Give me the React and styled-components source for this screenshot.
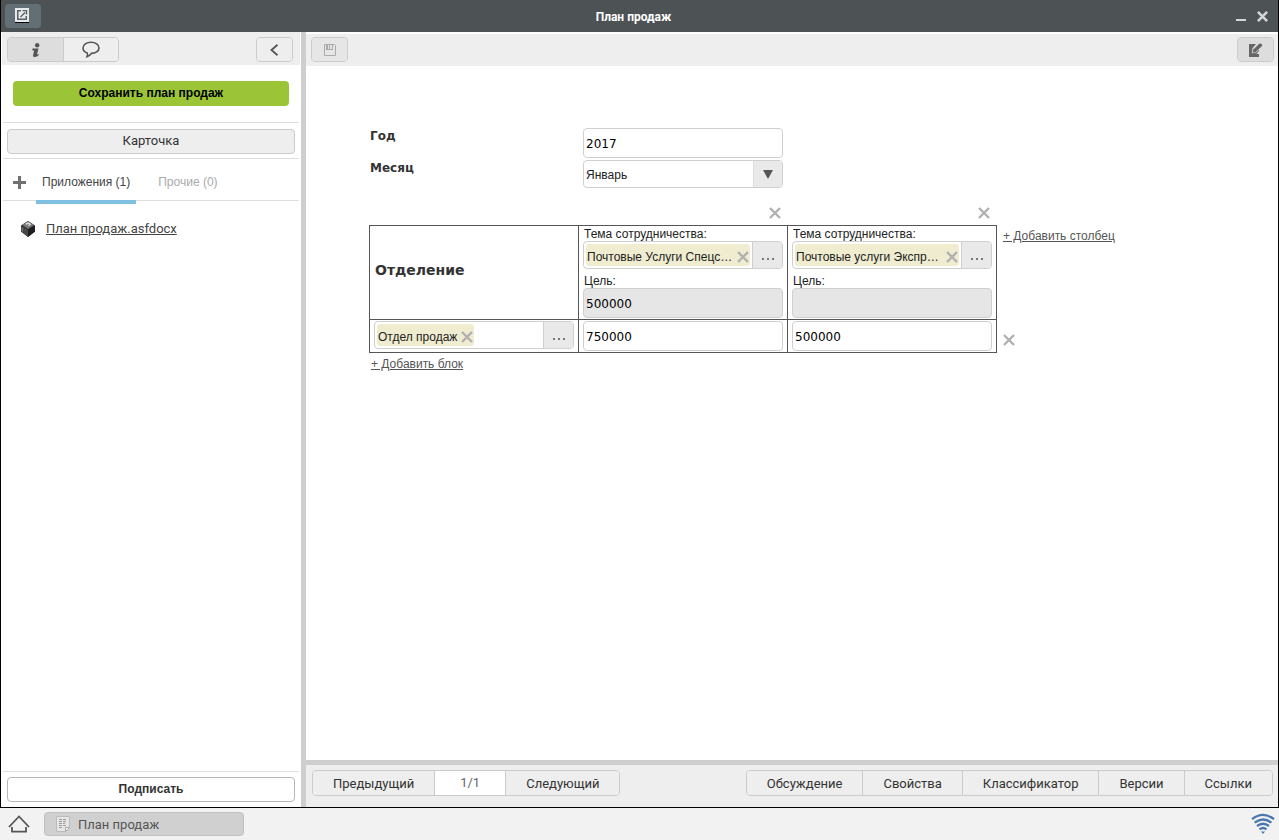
import React, { useState } from "react";
import styled, { createGlobalStyle } from "styled-components";

const sans = `"Liberation Sans", Arial, sans-serif`;
const ui = `Roboto, Tahoma, sans-serif`;
const verdana = `"DejaVu Sans", Verdana, sans-serif`;

const months = ["Январь", "Февраль", "Март", "Апрель", "Май", "Июнь", "Июль", "Август", "Сентябрь", "Октябрь", "Ноябрь", "Декабрь"];

// Icons
const OpenIcon = () => (
  <svg width="14" height="15" viewBox="0 0 14 15" aria-hidden="true">
    <path d="M0 0h14v14H0z" fill="#e8eaea" />
    <path d="M2 2h4v1.500H3.500v7h7V8H12v4H2z" fill="#56616a" />
    <path d="M5.500 9L10 4.500M7.500 2.600h4V6.600" fill="none" stroke="#56616a" strokeWidth="1.400" />
    <path d="M0 14.500h14" stroke="#000" />
  </svg>
);

const InfoIcon = () => (
  <svg width="10" height="16" viewBox="0 0 10 16" fill="#555" aria-hidden="true">
    <circle cx="6.200" cy="3.200" r="2.200" />
    <path d="M1.500 6.600h6L6 12.400q.8.100 1.400-.5l.7.700Q6.800 15 4 15q-2.500 0-1.800-2.600L3.200 8.400H1.300z" />
  </svg>
);

const CommentIcon = () => (
  <svg width="18" height="17" viewBox="0 0 18 17" fill="none" stroke="#555" strokeWidth="1.600" aria-hidden="true">
    <path d="M5 15.600C5.600 14.500 5.700 13 5.200 11.900 2.700 11.200 1 9.400 1 7 1 3.700 4.500 1.300 9 1.300S17 3.700 17 7s-3.600 5.400-7.600 5.400C8.200 14 6.700 15.200 5 15.600z" />
  </svg>
);

const BackIcon = () => (
  <svg width="12" height="12" viewBox="0 0 12 12" fill="none" stroke="#555" strokeWidth="1.800" aria-hidden="true">
    <path d="M8.500 .8L2.500 6l6 5.200" />
  </svg>
);

const PlusIcon = () => (
  <svg width="13" height="13" viewBox="0 0 13 13" aria-hidden="true">
    <path d="M5 0h3v5h5v3H8v5H5V8H0V5h5z" fill="#707070" />
  </svg>
);

const CubeIcon = () => (
  <svg width="14" height="16" viewBox="0 0 14 16" aria-hidden="true">
    <path d="M7 0l7 4.500v6L7 16l-7-5.500v-6z" fill="#2c2c2c" />
    <path d="M7 0l6 4-6 4-6-4z" fill="#777" />
    <path d="M0 5l7 3.800V16l-7-5.500z" fill="#484848" />
    <path d="M14 5L7 8.800V16l7-5.500z" fill="#1d1d1d" />
    <path d="M4.800 3.400L7.200 2l2 1.300-1.800 1.500" fill="none" stroke="#e4e4e4" strokeWidth="1.300" />
    <path d="M1.500 6.500v4" stroke="#777" />
  </svg>
);

const FloppyIcon = () => (
  <svg width="12" height="12" viewBox="0 0 12 12" aria-hidden="true">
    <path d="M.5.500h10l1 1v10H.5z" fill="none" stroke="#aaa" />
    <path d="M2 0h7v6H2z" fill="#aaa" />
    <path d="M4 1h1v4H4zM6 1h2v4H6z" fill="#e6e6e6" />
  </svg>
);

const EditIcon = () => (
  <svg width="15" height="14" viewBox="0 0 15 14" aria-hidden="true">
    <path d="M1 1h7L4.500 5.200 3.700 10.500l4.500-.9L11 6.800V14H1z" fill="#666" />
    <path d="M11 8v3H8.500z" fill="#ddd" />
    <path d="M4.500 9.800L5.300 6.500 11.600.6q.9-.6 2 .4t.4 2L7.700 9z" fill="#666" />
  </svg>
);

const CrossIcon = ({ size = 12, color = "#b0b0b0", weight = 2.4 }) => (
  <svg width={size} height={size} viewBox="0 0 12 12" aria-hidden="true">
    <path d="M1 1l10 10M11 1L1 11" stroke={color} strokeWidth={weight} />
  </svg>
);

const HomeIcon = () => (
  <svg width="22" height="18" viewBox="0 0 22 18" fill="none" stroke="#555" strokeWidth="1.800" aria-hidden="true">
    <path d="M1 12L11 1.500 21 12" />
    <path d="M4 12v4.700h14V12" />
  </svg>
);

const NoteIcon = () => (
  <svg width="14" height="16" viewBox="0 0 14 16" aria-hidden="true">
    <path d="M.5.500h13v11l-4 4h-9z" fill="#e6e6e6" stroke="#bbb" />
    <path d="M3 3.500h8M3 5.500h8M3 7.500h6M3 9.500h7M3 11.500h4" stroke="#999" strokeDasharray="3 1" />
    <path d="M13.500 11.500h-4v4z" fill="#fafafa" stroke="#aaa" />
  </svg>
);

const WifiIcon = () => (
  <svg width="24" height="22" viewBox="0 0 24 22" fill="none" stroke="#4a78ae" strokeWidth="2.300" aria-hidden="true">
    <path d="M1 6.200Q12-2.400 23 6.200" />
    <path d="M3.600 9.700Q12 3.200 20.400 9.700" />
    <path d="M6 13Q12 8.400 18 13" />
    <path d="M8.500 16.300Q12 13.700 15.500 16.300" />
    <path d="M10 18.600h4l-2 2.400z" fill="#4a78ae" stroke="none" />
  </svg>
);

// Lookup field with a tag and a "..." button
const Lookup = ({ label, value, wide }) => {
  const [tag, setTag] = useState(value);

  return (
    <LookupBox>
      <LookupValue>
        {tag && (
          <Tag $wide={wide}>
            <TagText>{tag}</TagText>
            <IconButton type="button" aria-label="Удалить" onClick={() => setTag("")}>
              <CrossIcon />
            </IconButton>
          </Tag>
        )}
      </LookupValue>
      <LookupButton type="button" aria-label={label}>
        <i /><i /><i />
      </LookupButton>
    </LookupBox>
  );
};

const App = () => {
  const [form, setForm] = useState({
    year: "2017",
    month: "Январь",
    first: "750000",
    second: "500000",
  });

  const handleChange = (e) => {
    const { name, value } = e.target;
    setForm({ ...form, [name]: value });
  };

  return (
    <>
      <GlobalStyle />
      <Page>
        <Window>
          <TitleBar>
            <OpenButton type="button" aria-label="Открыть">
              <OpenIcon />
            </OpenButton>
            <Title>План продаж</Title>
            <WindowControls>
              <IconButton type="button" aria-label="Свернуть">
                <svg width="10" height="12" viewBox="0 0 10 12" aria-hidden="true">
                  <path d="M0 10h10" stroke="#d6d6d6" strokeWidth="2" />
                </svg>
              </IconButton>
              <IconButton type="button" aria-label="Закрыть">
                <CrossIcon size={11} color="#d6d6d6" weight={2.8} />
              </IconButton>
            </WindowControls>
          </TitleBar>

          <Body>
            <Sidebar>
              <SideToolbar>
                <Group>
                  <ToolButton type="button" aria-label="Информация" $wide $active>
                    <InfoIcon />
                  </ToolButton>
                  <ToolButton type="button" aria-label="Комментарии" $wide>
                    <CommentIcon />
                  </ToolButton>
                </Group>
                <Group>
                  <ToolButton type="button" aria-label="Скрыть панель">
                    <BackIcon />
                  </ToolButton>
                </Group>
              </SideToolbar>
              <SaveArea>
                <SaveButton type="button">Сохранить план продаж</SaveButton>
              </SaveArea>
              <SideSection>
                <SideButton type="button">Карточка</SideButton>
              </SideSection>
              <Tabs>
                <AddButton type="button" aria-label="Добавить">
                  <PlusIcon />
                </AddButton>
                <Tab type="button" $active>Приложения (1)</Tab>
                <Tab type="button">Прочие (0)</Tab>
              </Tabs>
              <Files>
                <li>
                  <CubeIcon />
                  <FileLink href="#file">План продаж.asfdocx</FileLink>
                </li>
              </Files>
              <SideSection $bottom>
                <SideButton type="button" $primary>Подписать</SideButton>
              </SideSection>
            </Sidebar>

            <Main>
              <MainToolbar>
                <Group>
                  <ToolButton type="button" aria-label="Сохранить" disabled>
                    <FloppyIcon />
                  </ToolButton>
                </Group>
                <Group>
                  <ToolButton type="button" aria-label="Редактировать" $active>
                    <EditIcon />
                  </ToolButton>
                </Group>
              </MainToolbar>

              <Form>
                <Fields>
                  <FieldLabel htmlFor="year">Год</FieldLabel>
                  <Input id="year" name="year" value={form.year} onChange={handleChange} />
                  <FieldLabel htmlFor="month">Месяц</FieldLabel>
                  <SelectBox>
                    <Select id="month" name="month" value={form.month} onChange={handleChange}>
                      {months.map((m) => (
                        <option key={m}>{m}</option>
                      ))}
                    </Select>
                    <SelectArrow>
                      <svg width="10" height="9" viewBox="0 0 10 9" aria-hidden="true">
                        <path d="M0 0h10L5 9z" fill="#555" />
                      </svg>
                    </SelectArrow>
                  </SelectBox>
                </Fields>

                <Table>
                  <colgroup>
                    <col />
                    <col />
                    <col />
                    <col className="actions" />
                  </colgroup>
                  <tbody>
                    <tr>
                      <RemoveCell />
                      <RemoveCell>
                        <IconButton type="button" aria-label="Удалить столбец"><CrossIcon /></IconButton>
                      </RemoveCell>
                      <RemoveCell>
                        <IconButton type="button" aria-label="Удалить столбец"><CrossIcon /></IconButton>
                      </RemoveCell>
                      <RemoveCell />
                    </tr>
                    <tr>
                      <HeadCell scope="col">Отделение</HeadCell>
                      <Cell $head>
                        <CellLabel as="span">Тема сотрудничества:</CellLabel>
                        <Lookup label="Выбрать тему" value="Почтовые Услуги Спецс…" wide />
                        <CellLabel htmlFor="goal1" $second>Цель:</CellLabel>
                        <Input id="goal1" value="500000" readOnly />
                      </Cell>
                      <Cell $head>
                        <CellLabel as="span">Тема сотрудничества:</CellLabel>
                        <Lookup label="Выбрать тему" value="Почтовые услуги Экспр…" wide />
                        <CellLabel htmlFor="goal2" $second>Цель:</CellLabel>
                        <Input id="goal2" value="" readOnly />
                      </Cell>
                      <ActionCell>
                        <ActionLink href="#column">+ Добавить столбец</ActionLink>
                      </ActionCell>
                    </tr>
                    <tr>
                      <Cell>
                        <Lookup label="Выбрать отделение" value="Отдел продаж" />
                      </Cell>
                      <Cell>
                        <Input name="first" aria-label="План" value={form.first} onChange={handleChange} />
                      </Cell>
                      <Cell>
                        <Input name="second" aria-label="План" value={form.second} onChange={handleChange} />
                      </Cell>
                      <ActionCell $row>
                        <IconButton type="button" aria-label="Удалить блок"><CrossIcon /></IconButton>
                      </ActionCell>
                    </tr>
                  </tbody>
                </Table>
                <AddBlock>
                  <ActionLink href="#block">+ Добавить блок</ActionLink>
                </AddBlock>
              </Form>

              <Footer>
                <Group>
                  <FooterButton type="button">Предыдущий</FooterButton>
                  <PageCount>1/1</PageCount>
                  <FooterButton type="button">Следующий</FooterButton>
                </Group>
                <Group>
                  <FooterButton type="button">Обсуждение</FooterButton>
                  <FooterButton type="button">Свойства</FooterButton>
                  <FooterButton type="button">Классификатор</FooterButton>
                  <FooterButton type="button">Версии</FooterButton>
                  <FooterButton type="button">Ссылки</FooterButton>
                </Group>
              </Footer>
            </Main>
          </Body>
        </Window>

        <TaskBar>
          <IconButton type="button" aria-label="Домой">
            <HomeIcon />
          </IconButton>
          <TaskButton type="button">
            <NoteIcon />
            План продаж
          </TaskButton>
          <WifiIcon />
        </TaskBar>
      </Page>
    </>
  );
};

const GlobalStyle = createGlobalStyle`
  * {
    box-sizing: border-box;
  }
  body {
    margin: 0;
    background: #f2f2f2;
    font-family: ${sans};
    font-size: 12px;
    color: #333;
  }
  button, input, select {
    margin: 0;
    font-family: inherit;
  }
  button {
    cursor: pointer;
  }
  svg {
    display: block;
    flex-shrink: 0;
  }
`;

const Page = styled.div`
  display: flex;
  flex-direction: column;
  min-height: 100vh;
`;

const Window = styled.section`
  flex: 1;
  display: flex;
  flex-direction: column;
  border: 1px solid #000;
  border-top: none;
  background: #fff;
`;

const TitleBar = styled.header`
  display: grid;
  grid-template-columns: 1fr auto 1fr;
  align-items: center;
  height: 32px;
  padding: 0 10px 0 4px;
  background: #4d5255;
`;

const OpenButton = styled.button`
  display: flex;
  align-items: center;
  justify-content: center;
  width: 36px;
  height: 24px;
  padding: 0 2px 2px 0;
  border: none;
  border-radius: 4px;
  background: #636f75;
`;

const Title = styled.h1`
  margin: 0;
  padding: 2px 6px 0 0;
  font-family: ${ui};
  font-size: 12px;
  font-weight: bold;
  color: #fff;
`;

const WindowControls = styled.div`
  display: flex;
  align-items: center;
  justify-content: flex-end;
  gap: 11px;
`;

const IconButton = styled.button`
  display: inline-flex;
  padding: 0;
  border: none;
  background: none;
  vertical-align: top;
`;

const Body = styled.div`
  flex: 1;
  display: flex;
`;

const Sidebar = styled.aside`
  display: flex;
  flex-direction: column;
  flex: 0 0 305px;
  border-right: 5px solid #cecece;
  padding: 0 1px;
`;

const Toolbar = styled.div`
  display: flex;
  align-items: flex-start;
  justify-content: space-between;
  background: #eee;
`;

const SideToolbar = styled(Toolbar)`
  height: 33px;
  padding: 5px 7px 0 5px;
`;

const MainToolbar = styled(Toolbar)`
  height: 32px;
  margin-top: 2px;
  padding: 3px 4px 0 5px;
`;

const Group = styled.div`
  display: flex;
  border: 1px solid #cbcbcb;
  border-radius: 4px;
  overflow: hidden;

  && > * + * {
    border-left: 1px solid #cbcbcb;
  }
`;

const ToolButton = styled.button`
  display: flex;
  align-items: center;
  justify-content: center;
  width: ${(p) => (p.$wide ? "55px" : "35px")};
  height: 23px;
  padding: 0;
  border: 0;
  background: ${(p) => (p.$active ? "#ddd" : "#eee")};

  &:disabled {
    background: #e6e6e6;
    cursor: default;
  }
`;

const SaveArea = styled.div`
  padding: 16px 11px;
`;

const SaveButton = styled.button`
  display: block;
  width: 100%;
  height: 25px;
  padding: 0 0 2px;
  border: none;
  border-radius: 4px;
  background: #9bc537;
  color: #000;
  font-size: 12px;
  font-weight: bold;
`;

const SideSection = styled.div`
  margin: ${(p) => (p.$bottom ? "auto" : "0")} 1px 0;
  padding: ${(p) => (p.$bottom ? "5px 4px" : "6px 4px 4px")};
  border-top: 1px solid #ddd;
`;

const SideButton = styled.button`
  display: block;
  width: 100%;
  height: 25px;
  padding: 0 0 2px;
  border: 1px solid ${(p) => (p.$primary ? "#b8b8b8" : "#cbcbcb")};
  border-radius: 4px;
  background: ${(p) => (p.$primary ? "#fff" : "#eee")};
  color: #333;
  font-family: ${(p) => (p.$primary ? sans : ui)};
  font-size: ${(p) => (p.$primary ? "12px" : "13px")};
  font-weight: ${(p) => (p.$primary ? "bold" : "normal")};
`;

const Tabs = styled.div`
  display: flex;
  height: 43px;
  margin: 0 1px;
  padding-left: 10px;
  border-top: 1px solid #ddd;
  border-bottom: 1px solid #ddd;
`;

const AddButton = styled(IconButton)`
  align-items: center;
  margin-right: 10px;
  padding-top: 6px;
`;

const Tab = styled.button`
  height: 45px;
  margin-right: 16px;
  padding: 5px 6px 0;
  border: none;
  border-bottom: 4px solid ${(p) => (p.$active ? "#7fbfdf" : "transparent")};
  background: none;
  color: ${(p) => (p.$active ? "#444" : "#aaa")};
  font-size: 12px;
`;

const Files = styled.ul`
  margin: 0;
  padding: 18px 19px;
  list-style: none;

  li {
    display: flex;
    align-items: center;
    gap: 11px;
  }
`;

const FileLink = styled.a`
  color: #444;
  font-family: ${ui};
  font-size: 13px;
  line-height: 20px;
`;

const Main = styled.main`
  flex: 1;
  min-width: 0;
  display: flex;
  flex-direction: column;
`;

const Form = styled.form`
  flex: 1;
  padding: 62px 63px 20px;
`;

const Fields = styled.div`
  display: grid;
  grid-template-columns: 214px 200px;
  row-gap: 2px;
`;

const FieldLabel = styled.label`
  padding-left: 1px;
  font-family: ${verdana};
  font-size: 12px;
  font-weight: bold;
  line-height: 16px;
`;

const Input = styled.input`
  display: block;
  width: 100%;
  height: 30px;
  padding: 2px 2px 0;
  border: 1px solid #cfcfcf;
  border-radius: 4px;
  background: #fff;
  color: #000;
  font-family: ${verdana};
  font-size: 12px;

  &:read-only {
    background: #e6e6e6;
  }
`;

const SelectBox = styled.div`
  position: relative;
`;

const Select = styled.select`
  appearance: none;
  display: block;
  width: 100%;
  height: 28px;
  padding: 2px 34px 0 2px;
  border: 1px solid #cfcfcf;
  border-radius: 4px;
  background: #fff;
  color: #222;
  font-size: 12px;
`;

const SelectArrow = styled.span`
  position: absolute;
  top: 1px;
  right: 1px;
  bottom: 1px;
  display: flex;
  align-items: center;
  justify-content: center;
  width: 29px;
  border-left: 1px solid #ddd;
  border-radius: 0 3px 3px 0;
  background: #e9e9e9;
  pointer-events: none;
`;

const Table = styled.table`
  table-layout: fixed;
  width: 760px;
  border-collapse: collapse;

  col {
    width: 209px;
  }
  col.actions {
    width: auto;
  }
`;

const RemoveCell = styled.td`
  height: 37px;
  padding: 0 7px 4px 0;
  text-align: right;
  vertical-align: bottom;
`;

const HeadCell = styled.th`
  padding: 0 5px 4px;
  border: 1px solid #555;
  font-family: ${verdana};
  font-size: 14px;
  text-align: left;
`;

const Cell = styled.td`
  padding: ${(p) => (p.$head ? "0 4px 1px" : "1px 4px")};
  border: 1px solid #555;
  vertical-align: top;
`;

const CellLabel = styled.label`
  display: block;
  margin-top: ${(p) => (p.$second ? "4px" : "0")};
  padding: 1px 0 0 1px;
  color: #222;
  line-height: 14px;
`;

const ActionCell = styled.td`
  padding: ${(p) => (p.$row ? "15px 6px 0" : "4px 6px")};
  vertical-align: top;
`;

const ActionLink = styled.a`
  color: #555;
  line-height: 15px;
`;

const AddBlock = styled.div`
  padding: 4px 2px;
`;

const LookupBox = styled.div`
  display: flex;
  height: 28px;
  border: 1px solid #cfcfcf;
  border-radius: 4px;
  overflow: hidden;
`;

const LookupValue = styled.div`
  flex: 1;
  min-width: 0;
  display: flex;
  padding: 2px;
`;

const Tag = styled.span`
  display: flex;
  align-items: center;
  justify-content: space-between;
  gap: 4px;
  width: ${(p) => (p.$wide ? "100%" : "auto")};
  padding: 4px 1px 0;
  border-radius: 3px;
  background: #f0ecd0;
  color: #222;
`;

const TagText = styled.span`
  white-space: nowrap;
`;

const LookupButton = styled.button`
  display: flex;
  align-items: center;
  justify-content: center;
  gap: 3px;
  width: 30px;
  padding: 8px 0 0;
  border: 0;
  border-left: 1px solid #cfcfcf;
  background: #e9e9e9;

  i {
    width: 2px;
    height: 2px;
    background: #777;
  }
`;

const Footer = styled.footer`
  display: flex;
  align-items: flex-start;
  justify-content: space-between;
  padding: 5px 5px 11px 6px;
  border-top: 5px solid #cecece;
  background: #eee;
`;

const FooterButton = styled.button`
  height: 24px;
  padding: 0 20px;
  border: 0;
  background: #eee;
  color: #333;
  font-family: ${ui};
  font-size: 13px;
`;

const PageCount = styled.span`
  width: 71px;
  background: #fff;
  color: #666;
  font-family: ${ui};
  font-size: 13px;
  line-height: 24px;
  text-align: center;
`;

const TaskBar = styled.nav`
  display: flex;
  align-items: center;
  gap: 14px;
  height: 32px;
  padding: 0 4px 0 8px;
  background: #f2f2f2;

  > svg {
    margin-left: auto;
  }
`;

const TaskButton = styled.button`
  display: flex;
  align-items: center;
  gap: 8px;
  width: 200px;
  height: 24px;
  padding: 0 11px;
  border: 1px solid #bfbfbf;
  border-radius: 4px;
  background: #d0d0d0;
  color: #555;
  font-family: ${ui};
  font-size: 13px;
`;

export default App;
